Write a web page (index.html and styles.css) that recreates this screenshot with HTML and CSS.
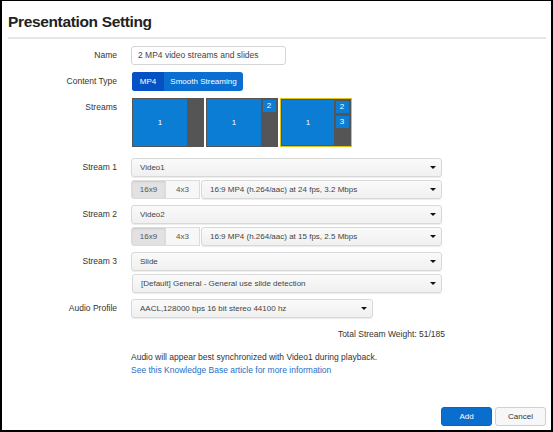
FILE: index.html
```html
<!DOCTYPE html>
<html lang="en">
<head>
    <meta charset="UTF-8">
    <title>Presentation Setting</title>
    <link rel="stylesheet" href="styles.css">
</head>
<body>
    <div class="frame">
        <h1 class="title">Presentation Setting</h1>
        <div class="rule"></div>

        <div class="form">
            <div class="row">
                <label class="label">Name</label>
                <div class="input">2 MP4 video streams and slides</div>
            </div>

            <div class="row">
                <label class="label">Content Type</label>
                <div class="btn-group">
                    <span class="seg active">MP4</span>
                    <span class="seg">Smooth Streaming</span>
                </div>
            </div>

            <div class="row streams-row">
                <label class="label">Streams</label>
                <div class="layouts">
                    <div class="layout">
                        <div class="main">1</div>
                        <div class="side"></div>
                    </div>
                    <div class="layout">
                        <div class="main">1</div>
                        <div class="side"><span class="mini">2</span></div>
                    </div>
                    <div class="layout selected">
                        <div class="main">1</div>
                        <div class="side"><span class="mini">2</span><span class="mini">3</span></div>
                    </div>
                </div>
            </div>

            <div class="row stream">
                <label class="label">Stream 1</label>
                <div class="controls">
                    <div class="select">Video1<span class="caret"></span></div>
                    <div class="sub">
                        <span class="ratio active">16x9</span>
                        <span class="ratio">4x3</span>
                        <div class="select">16:9 MP4 (h.264/aac) at 24 fps, 3.2 Mbps<span class="caret"></span></div>
                    </div>
                </div>
            </div>

            <div class="row stream">
                <label class="label">Stream 2</label>
                <div class="controls">
                    <div class="select">Video2<span class="caret"></span></div>
                    <div class="sub">
                        <span class="ratio active">16x9</span>
                        <span class="ratio">4x3</span>
                        <div class="select">16:9 MP4 (h.264/aac) at 15 fps, 2.5 Mbps<span class="caret"></span></div>
                    </div>
                </div>
            </div>

            <div class="row stream">
                <label class="label">Stream 3</label>
                <div class="controls">
                    <div class="select">Slide<span class="caret"></span></div>
                    <div class="sub">
                        <div class="select">[Default] General - General use slide detection<span class="caret"></span></div>
                    </div>
                </div>
            </div>

            <div class="row">
                <label class="label">Audio Profile</label>
                <div class="select audio">AACL,128000 bps 16 bit stereo 44100 hz<span class="caret"></span></div>
            </div>

            <div class="weight">Total Stream Weight: 51/185</div>

            <div class="note">
                <p>Audio will appear best synchronized with Video1 during playback.</p>
                <a href="#">See this Knowledge Base article for more information</a>
            </div>
        </div>

        <div class="footer">
            <button class="btn primary">Add</button>
            <button class="btn">Cancel</button>
        </div>
    </div>
</body>
</html>
```

FILE: styles.css
```css
body {
    margin: 0;
    font-family: 'Liberation Sans', Arial, sans-serif;
    font-size: 8.5px;
    color: #333;
    background-color: #fff;
}

.frame {
    box-sizing: border-box;
    width: 553px;
    height: 432px;
    border: 2px solid #000;
    border-top-width: 1px;
    padding: 0 5px 0 6px;
    position: relative;
}

.title {
    margin: 0;
    padding-top: 11px;
    font-size: 15.5px;
    line-height: 20px;
    letter-spacing: -0.35px;
    font-weight: bold;
    color: #222;
}

.rule {
    margin-top: 5px;
    height: 2px;
    background-color: #e6e6e6;
}

.form {
    margin-top: 7px;
}

.row {
    display: flex;
    align-items: flex-start;
    margin-bottom: 7px;
}

.label {
    width: 109px;
    margin-right: 14px;
    text-align: right;
    line-height: 19px;
    flex-shrink: 0;
}

.input {
    box-sizing: border-box;
    width: 155px;
    height: 19px;
    line-height: 17px;
    padding: 0 6px;
    border: 1px solid #d4d4d4;
    border-radius: 3px;
    color: #444;
}

/* content type toggle */
.btn-group {
    display: flex;
    margin-left: 1px;
    border-radius: 3px;
    overflow: hidden;
    background-color: #0a6fd1;
    height: 19px;
}

.seg {
    color: #fff;
    font-size: 8px;
    line-height: 19px;
    width: 79px;
    text-align: center;
}

.seg.active {
    background-color: #0552c4;
    width: 32px;
}

/* stream layouts */
.streams-row {
    margin-bottom: 11px;
}

.layouts {
    display: flex;
    gap: 2px;
    margin-left: 1px;
}

.layout {
    box-sizing: border-box;
    width: 72px;
    height: 49px;
    display: flex;
    border: 1px solid #555;
    background-color: #555;
}

.layout.selected {
    border: 1px solid #e2c418;
    box-shadow: inset 0 0 0 1px #555;
    padding: 1px;
}

.main {
    flex: 1;
    background-color: #0b7dd4;
    color: #fff;
    font-size: 8px;
    display: flex;
    align-items: center;
    justify-content: center;
}

.side {
    width: 16px;
    display: flex;
    flex-direction: column;
    align-items: center;
    gap: 3px;
    padding-top: 1px;
}

.mini {
    width: 13px;
    height: 12px;
    background-color: #0b7dd4;
    color: #fff;
    font-size: 8px;
    line-height: 12px;
    text-align: center;
}

/* selects */
.stream {
    margin-bottom: 6px;
}

.controls {
    width: 311px;
    display: flex;
    flex-direction: column;
    gap: 3px;
}

.sub {
    display: flex;
}

.select {
    box-sizing: border-box;
    position: relative;
    height: 19px;
    line-height: 17px;
    padding: 0 8px;
    border: 1px solid #d8d8d8;
    border-radius: 3px;
    background: linear-gradient(#fafafa, #f0f0f0);
    box-shadow: 0 1px 1px rgba(0, 0, 0, 0.08);
    color: #444;
    font-size: 8px;
    flex: 1;
}

.sub .select {
    margin-left: 1px;
}

.caret {
    position: absolute;
    right: 5px;
    top: 7px;
    border-left: 3px solid transparent;
    border-right: 3px solid transparent;
    border-top: 3px solid #111;
}

.ratio {
    box-sizing: border-box;
    width: 35px;
    height: 19px;
    line-height: 17px;
    text-align: center;
    font-size: 8px;
    color: #555;
    border: 1px solid #dcdcdc;
    background-color: #f7f7f7;
}

.ratio.active {
    background-color: #e2e2e2;
    border-radius: 3px 0 0 3px;
    box-shadow: inset 0 1px 2px rgba(0, 0, 0, 0.1);
}

.ratio + .ratio {
    width: 34px;
    border-left: none;
    border-radius: 0;
}

.select.audio {
    flex: none;
    width: 242px;
}

.weight {
    margin-top: 11px;
    width: 437px;
    text-align: right;
}

.note {
    margin-top: 12px;
    margin-left: 123px;
    line-height: 13px;
}

.note p {
    margin: 0;
}

.note a {
    color: #1f6fc5;
    text-decoration: none;
}

.footer {
    position: absolute;
    right: 5px;
    bottom: 4px;
    display: flex;
    gap: 3px;
}

.btn {
    box-sizing: border-box;
    height: 19px;
    width: 51px;
    border: 1px solid #d0d0d0;
    border-radius: 3px;
    background-color: #f7f7f7;
    color: #333;
    font-family: 'Liberation Sans', Arial, sans-serif;
    font-size: 8px;
    padding: 0;
}

.btn.primary {
    background-color: #0a6ecf;
    border-color: #0a64bd;
    color: #fff;
}
```
